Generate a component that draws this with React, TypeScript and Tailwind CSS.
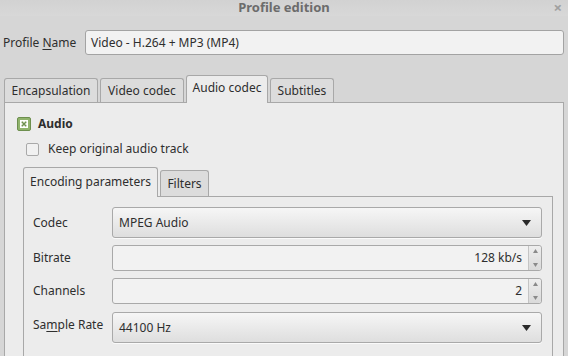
import React from 'react';

const font = { fontFamily: '"Noto Sans", "Open Sans", sans-serif' };

const Arrow = () => (
  <svg width="9" height="6" viewBox="0 0 9 6">
    <path d="M0 0 H9 L4.5 6 Z" fill="#2a2a2a" />
  </svg>
);

const Combo = ({ value }: { value: string }) => (
  <div className="flex h-[31px] flex-1 items-center justify-between rounded-[3px] border border-[#a9a9a9] bg-gradient-to-b from-[#f6f6f6] to-[#dedede] pl-[6px] pr-[10px] shadow-[0_1px_0_#fafafa]">
    <span>{value}</span>
    <Arrow />
  </div>
);

const Spin = ({ value }: { value: string }) => (
  <div className="flex h-[26px] flex-1 rounded-[3px] border border-[#a9a9a9] bg-[#f2f2f2]">
    <div className="flex flex-1 items-center justify-end pr-[6px]">{value}</div>
    <div className="flex w-[13px] flex-col items-center justify-between rounded-r-[3px] border-l border-[#c4c4c4] bg-gradient-to-b from-[#eeeeee] to-[#dadada] py-[3px]">
      <svg width="5" height="4" viewBox="0 0 5 4">
        <path d="M0 4 L2.5 0 L5 4 Z" fill="#8a8a8a" />
      </svg>
      <svg width="5" height="4" viewBox="0 0 5 4">
        <path d="M0 0 H5 L2.5 4 Z" fill="#8a8a8a" />
      </svg>
    </div>
  </div>
);

const Row = ({ label, children, h }: { label: React.ReactNode; children: React.ReactNode; h: string }) => (
  <div className={`flex items-center ${h}`}>
    <div className="w-[79px] shrink-0">{label}</div>
    {children}
  </div>
);

export default function App() {
  return (
    <div
      className="relative h-[356px] w-[568px] overflow-hidden bg-[#d6d6d6] text-[12px] text-[#2e2e2e]"
      style={font}
    >
      {/* title bar */}
      <div className="relative flex h-[16px] items-center justify-center bg-gradient-to-b from-[#d2d2d2] to-[#d8d8d8]">
        <span className="-mt-[1px] text-[13px] font-bold text-[#6c6c6c]">Profile edition</span>
        <span className="absolute right-[6px] top-[0px] text-[15px] font-bold leading-none text-[#a0a0a0]">×</span>
      </div>

      {/* profile name */}
      <div className="mt-[14px] flex items-center pl-[3px] pr-[4px]">
        <span className="w-[82px] shrink-0">
          Profile <span className="underline underline-offset-2">N</span>ame
        </span>
        <div className="flex h-[25px] flex-1 items-center rounded-[3px] border border-[#a3a3a3] bg-[#f2f2f2] pl-[5px]">
          Video - H.264 + MP3 (MP4)
        </div>
      </div>

      {/* outer tabs */}
      <div className="mt-[20px] flex items-end pl-[4px]">
        <div className="flex h-[24px] w-[94px] items-center justify-center rounded-t-[3px] border border-b-0 border-[#a8a8a8] bg-[#dcdcdc]">
          Encapsulation
        </div>
        <div className="ml-[2px] flex h-[24px] w-[84px] items-center justify-center rounded-t-[3px] border border-b-0 border-[#a8a8a8] bg-[#dcdcdc]">
          Video codec
        </div>
        <div className="relative z-10 -mb-px ml-[2px] flex h-[28px] w-[82px] items-center justify-center rounded-t-[3px] border border-b-0 border-[#a8a8a8] bg-[#ececec] pb-[3px]">
          Audio codec
        </div>
        <div className="ml-[2px] flex h-[24px] w-[64px] items-center justify-center rounded-t-[3px] border border-b-0 border-[#a8a8a8] bg-[#dcdcdc]">
          Subtitles
        </div>
      </div>

      {/* outer pane */}
      <div className="ml-[4px] mr-[4px] h-[260px] border border-b-0 border-[#a8a8a8] bg-[#ececec] pl-[12px] pt-[12px]">
        <div className="flex items-center">
          <svg width="14" height="14" viewBox="0 0 14 14">
            <rect x="0.5" y="0.5" width="13" height="13" rx="1.5" fill="#90b36c" stroke="#6d8f4e" />
            <rect x="3.5" y="3.5" width="7" height="7" fill="#f4f8ef" stroke="#ffffff" />
            <path d="M4.8 4.8 L9.2 9.2 M9.2 4.8 L4.8 9.2" stroke="#6d8f4e" strokeWidth="1.4" />
          </svg>
          <span className="ml-[7px] font-bold">Audio</span>
        </div>

        <div className="ml-[9px] mt-[7px] flex items-center">
          <div className="h-[13px] w-[13px] rounded-[2px] border border-[#a9a9a9] bg-[#f1f1f1]" />
          <span className="ml-[9px]">Keep original audio track</span>
        </div>

        {/* inner tabs */}
        <div className="ml-[6px] mt-[9px] flex items-end">
          <div className="relative z-10 -mb-px flex h-[30px] w-[135px] items-center justify-center rounded-t-[3px] border border-b-0 border-[#a8a8a8] bg-[#ececec] pb-[2px]">
            Encoding parameters
          </div>
          <div className="ml-[2px] flex h-[26px] w-[49px] items-center justify-center rounded-t-[3px] border border-b-0 border-[#a8a8a8] bg-[#dcdcdc]">
            Filters
          </div>
        </div>

        {/* inner pane */}
        <div className="ml-[6px] mr-[10px] h-[200px] border border-b-0 border-[#a8a8a8] bg-[#ececec] pl-[9px] pr-[10px] pt-[10px]">
          <Row label="Codec" h="h-[31px]">
            <Combo value="MPEG Audio" />
          </Row>
          <div className="mt-[7px]">
            <Row label="Bitrate" h="h-[26px]">
              <Spin value="128 kb/s" />
            </Row>
          </div>
          <div className="mt-[7px]">
            <Row label="Channels" h="h-[26px]">
              <Spin value="2" />
            </Row>
          </div>
          <div className="mt-[8px]">
            <Row
              label={
                <span className="-mt-[6px] block">
                  Sa<span className="underline underline-offset-2">m</span>ple Rate
                </span>
              }
              h="h-[31px]"
            >
              <Combo value="44100 Hz" />
            </Row>
          </div>
        </div>
      </div>
    </div>
  );
}
